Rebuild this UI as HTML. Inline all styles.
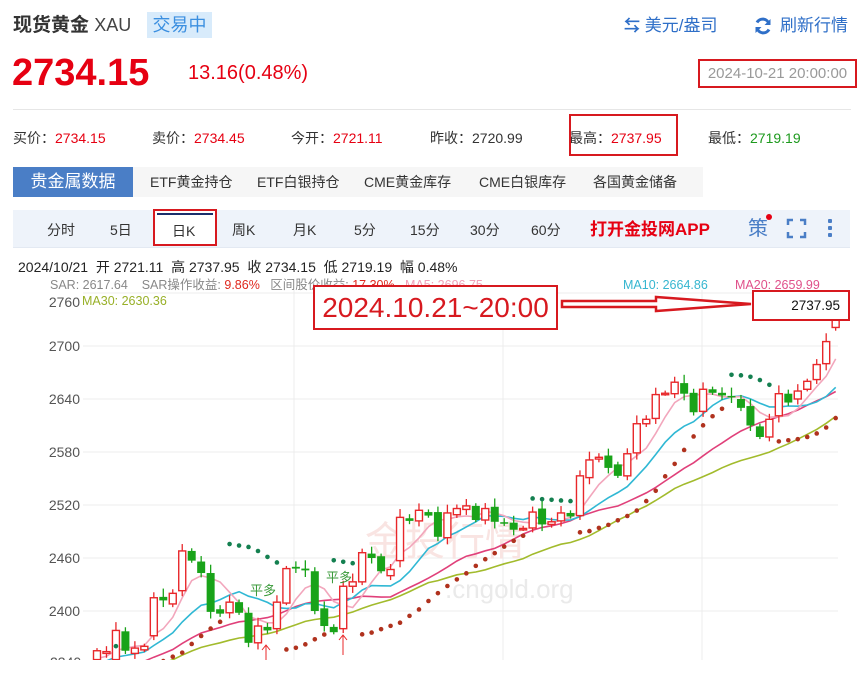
<!DOCTYPE html>
<html><head><meta charset="utf-8">
<style>
*{margin:0;padding:0;box-sizing:border-box}
body{width:859px;height:692px;background:#fff;font-family:"Liberation Sans","Noto Sans CJK SC",sans-serif;position:relative;overflow:hidden;color:#333}
.a{position:absolute;white-space:nowrap}
.red{color:#e60012}
</style></head><body>
<div class="a" style="left:13px;top:12px;font-size:19px;font-weight:bold;color:#333;line-height:26px">现货黄金 <span style="font-weight:normal;font-size:18px;color:#444">XAU</span></div>
<div class="a" style="left:147px;top:12px;width:65px;height:26px;background:#d8ebfb;color:#3b8fe0;font-size:18px;line-height:26px;text-align:center">交易中</div>
<div class="a" style="left:624px;top:14px;font-size:17px;color:#2f6fc8;line-height:24px"><span style="font-weight:bold;font-size:16px">⇆</span> 美元/盎司</div>
<svg class="a" style="left:753px;top:16px" width="20" height="20" viewBox="0 0 20 20"><path d="M16 8A6.5 6.5 0 0 0 4 6.5M4 12a6.5 6.5 0 0 0 12 1.5" fill="none" stroke="#2f6fc8" stroke-width="3"/><path d="M17.5 3v6h-6z M2.5 17v-6h6z" fill="#2f6fc8"/></svg>
<div class="a" style="left:780px;top:14px;font-size:17px;color:#2f6fc8;line-height:24px">刷新行情</div>
<div class="a red" style="left:12px;top:50px;font-size:38px;font-weight:bold;line-height:46px">2734.15</div>
<div class="a red" style="left:188px;top:60px;font-size:20px;line-height:26px">13.16(0.48%)</div>
<div class="a" style="left:698px;top:59px;width:159px;height:29px;border:2px solid #d7191f;color:#999;font-size:15px;line-height:25px;text-align:center">2024-10-21 20:00:00</div>
<div class="a" style="left:13px;top:109px;width:838px;height:1px;background:#e6e6e6"></div>
<div class="a" style="left:13px;top:129px;font-size:14px;line-height:18px">买价：<span class="red">2734.15</span></div>
<div class="a" style="left:152px;top:129px;font-size:14px;line-height:18px">卖价：<span class="red">2734.45</span></div>
<div class="a" style="left:291px;top:129px;font-size:14px;line-height:18px">今开：<span class="red">2721.11</span></div>
<div class="a" style="left:430px;top:129px;font-size:14px;line-height:18px">昨收：2720.99</div>
<div class="a" style="left:569px;top:129px;font-size:14px;line-height:18px">最高：<span class="red">2737.95</span></div>
<div class="a" style="left:569px;top:114px;width:109px;height:42px;border:2px solid #d7191f"></div>
<div class="a" style="left:708px;top:129px;font-size:14px;line-height:18px">最低：<span style="color:#1e9a1e">2719.19</span></div>
<div class="a" style="left:13px;top:167px;width:690px;height:30px;background:#f6f6f6"></div>
<div class="a" style="left:13px;top:167px;width:120px;height:30px;background:#4a7ec6;color:#fff;font-size:17px;line-height:30px;text-align:center">贵金属数据</div>
<div class="a" style="left:150px;top:167px;font-size:14px;line-height:30px;color:#333">ETF黄金持仓</div>
<div class="a" style="left:257px;top:167px;font-size:14px;line-height:30px;color:#333">ETF白银持仓</div>
<div class="a" style="left:364px;top:167px;font-size:14px;line-height:30px;color:#333">CME黄金库存</div>
<div class="a" style="left:479px;top:167px;font-size:14px;line-height:30px;color:#333">CME白银库存</div>
<div class="a" style="left:593px;top:167px;font-size:14px;line-height:30px;color:#333">各国黄金储备</div>
<div class="a" style="left:13px;top:210px;width:837px;height:38px;background:#eef3fa;border-bottom:1px solid #e3e9f2"></div>
<div class="a" style="left:13px;top:210px;font-size:14px;line-height:40px;color:#333">
<span class="a" style="left:34px">分时</span><span class="a" style="left:97px">5日</span><span class="a" style="left:159px">日K</span><span class="a" style="left:219px">周K</span><span class="a" style="left:280px">月K</span><span class="a" style="left:341px">5分</span><span class="a" style="left:397px">15分</span><span class="a" style="left:457px">30分</span><span class="a" style="left:518px">60分</span></div>
<div class="a" style="left:153px;top:209px;width:64px;height:37px;border:2px solid #d7191f;background:#fff"></div>
<div class="a" style="left:157px;top:213px;width:56px;height:2px;background:#1b2f6b"></div>
<div class="a" style="left:172px;top:220px;font-size:14px;line-height:22px;color:#333">日K</div>
<div class="a" style="left:590px;top:218px;font-size:17px;font-weight:bold;color:#e60012;line-height:24px">打开金投网APP</div>
<div class="a" style="left:748px;top:216px;font-size:20px;color:#4a7ec6;line-height:26px">策</div>
<div class="a" style="left:766px;top:214px;width:6px;height:6px;border-radius:50%;background:#e60012"></div>
<svg class="a" style="left:786px;top:218px" width="21" height="21" viewBox="0 0 21 21" fill="none" stroke="#4a7ec6" stroke-width="2.5"><path d="M2 7V2h5M14 2h5v5M19 14v5h-5M7 19H2v-5"/></svg>
<div class="a" style="left:828px;top:219px;width:4px;height:4px;background:#4a7ec6;border-radius:1px"></div>
<div class="a" style="left:828px;top:226px;width:4px;height:4px;background:#4a7ec6;border-radius:1px"></div>
<div class="a" style="left:828px;top:233px;width:4px;height:4px;background:#4a7ec6;border-radius:1px"></div>
<div class="a" style="left:18px;top:257px;font-size:14px;line-height:20px;color:#222">2024/10/21&nbsp; 开 2721.11&nbsp; 高 2737.95&nbsp; 收 2734.15&nbsp; 低 2719.19&nbsp; 幅 0.48%</div>
<div class="a" style="left:50px;top:277px;font-size:12.5px;line-height:16px;color:#888">SAR: 2617.64 &nbsp; &nbsp;SAR操作收益: <span style="color:#e0281e">9.86%</span> &nbsp; 区间股价收益: <span style="color:#e0281e">17.30%</span> &nbsp; <span style="color:#f0a0b8">MA5: 2696.75</span></div>
<div class="a" style="left:623px;top:277px;font-size:12.5px;line-height:16px;color:#36b6d0">MA10: 2664.86</div>
<div class="a" style="left:735px;top:277px;font-size:12.5px;line-height:16px;color:#e0508a">MA20: 2659.99</div>
<div class="a" style="left:82px;top:293px;font-size:12.5px;line-height:16px;color:#98b028">MA30: 2630.36</div>
<svg class="a" style="left:0;top:0" width="859" height="692" id="ch"></svg>
<div class="a" style="left:313px;top:285px;width:245px;height:45px;border:2px solid #d7191f;background:#fff;color:#d7191f;font-size:28px;line-height:41px;text-align:center;font-family:'Liberation Sans Narrow','Liberation Sans',sans-serif">2024.10.21~20:00</div>
<svg class="a" style="left:558px;top:294px" width="196" height="22"><path d="M4 7H98V3L193 10 98 17V13H4Z" fill="#fff" stroke="#d7191f" stroke-width="2.5"/></svg>
<div class="a" style="left:752px;top:290px;width:98px;height:31px;border:2px solid #d7191f;background:#fff;font-size:13.5px;line-height:27px;text-align:right;padding-right:8px;color:#111">2737.95</div>
<script>
var D=[[2345,2355],[2352,2354],[2345,2378],[2377,2355],[2352,2358],[2356,2360],[2372,2415],[2416,2412],[2408,2420],[2423,2468],[2468,2457],[2456,2443],[2443,2399],[2402,2397],[2398,2410],[2410,2398],[2398,2364],[2364,2383],[2382,2378],[2380,2410],[2409,2448],[2450,2448],[2448,2446],[2445,2400],[2403,2383],[2382,2376],[2380,2428],[2428,2433],[2433,2466],[2465,2460],[2462,2445],[2440,2447],[2457,2506],[2505,2502],[2502,2514],[2512,2508],[2512,2484],[2483,2511],[2509,2516],[2515,2519],[2519,2503],[2503,2516],[2518,2501],[2500.5,2500],[2500,2492],[2493,2493.5],[2494,2512],[2516,2498],[2498,2501],[2502,2511],[2511,2507],[2508,2553],[2551,2571],[2572,2574],[2576,2562],[2566,2553],[2553,2578],[2579,2612],[2612,2617],[2618,2645],[2646,2646.5],[2646,2659],[2658,2646],[2647,2625],[2626,2651],[2651,2647],[2647,2644],[2643.5,2643],[2640,2630],[2632,2610],[2609,2597],[2597,2617],[2621,2646],[2646,2636],[2640,2649],[2651,2660],[2662,2679],[2680,2705],[2721,2734]];
function Y(p){return 346+(2700-p)*53/60}
function X(i){return 97+9.47*i}
var s='';
[2760,2700,2640,2580,2520,2460,2400].forEach(function(p){var y=Y(p);s+='<line x1="83" x2="838" y1="'+y+'" y2="'+y+'" stroke="#ececec"/>';var ty=p==2760?y+14:y+5;s+='<text x="80" y="'+ty+'" text-anchor="end" font-size="14" fill="#555" font-family="Liberation Sans">'+p+'</text>';});
[294,503,702].forEach(function(x){s+='<line x1="'+x+'" x2="'+x+'" y1="290" y2="660" stroke="#ececec"/>'});
s+='<text x="50" y="667" font-size="14" fill="#555" font-family="Liberation Sans">2340</text>';
s+='<text x="445" y="598" font-size="26" fill="#eaeaea" font-family="Liberation Sans">.cngold.org</text>';
s+='<text x="365" y="555" font-size="40" fill="#f9e4e2" font-family="Noto Sans CJK SC">金投行情</text>';
var H=[],L=[],C=[];
D.forEach(function(d,i){var w=3+((i*7)%5)*1.6;H.push(Math.max(d[0],d[1])+w);L.push(Math.min(d[0],d[1])-w*0.8);C.push(d[1]);});
var pre=[];for(var k=0;k<30;k++)pre.push(2300+k*1.6);
var all=pre.concat(C);
function ma(n,col){var pts=[];for(var i=0;i<C.length;i++){var j=i+30,t=0;for(var m=0;m<n;m++)t+=all[j-m];pts.push(X(i).toFixed(1)+','+Y(t/n).toFixed(1));}s+='<polyline points="'+pts.join(' ')+'" fill="none" stroke="'+col+'" stroke-width="1.6"/>';}
ma(30,'#a2bb2c');ma(20,'#e0407a');ma(10,'#30b8d4');ma(5,'#f2a6bc');
D.forEach(function(d,i){var x=X(i),o=d[0],c=d[1],up=c>=o,col=up?'#e8272a':'#19a319';var t=Y(Math.max(o,c)),b=Y(Math.min(o,c));if(b-t<1.5)b=t+1.5;
s+='<line x1="'+x+'" x2="'+x+'" y1="'+Y(H[i])+'" y2="'+Y(L[i])+'" stroke="'+col+'" stroke-width="1.3"/>';
if(up)s+='<rect x="'+(x-3.5)+'" y="'+t+'" width="7" height="'+(b-t)+'" fill="#fff" stroke="'+col+'" stroke-width="1.4"/>';
else s+='<rect x="'+(x-4)+'" y="'+t+'" width="8" height="'+(b-t)+'" fill="'+col+'"/>';});
var tr=1,af=0.02,ep=H[0],sar=L[0]-5;
for(var i=1;i<C.length;i++){sar=sar+af*(ep-sar);
if(tr==1){if(L[i]<sar){tr=-1;sar=ep;ep=L[i];af=0.02;}else if(H[i]>ep){ep=H[i];af=Math.min(0.2,af+0.02);}}
else{if(H[i]>sar){tr=1;sar=ep;ep=H[i];af=0.02;}else if(L[i]<ep){ep=L[i];af=Math.min(0.2,af+0.02);}}
s+='<circle cx="'+X(i)+'" cy="'+Y(sar)+'" r="2.3" fill="'+(tr==1?'#b0321e':'#148050')+'"/>';}
s+='<text x="250" y="595" font-size="13" fill="#3a9a3a" font-family="Noto Sans CJK SC">平多</text><text x="326" y="582" font-size="13" fill="#3a9a3a" font-family="Noto Sans CJK SC">平多</text>';
s+='<path d="M266 645v15M262 650l4-5 4 5M343 635v20M339 640l4-5 4 5" stroke="#e8272a" fill="none"/>';
s+='<rect x="0" y="660" width="859" height="32" fill="#fff"/>';
document.getElementById('ch').innerHTML=s;
</script>
</body></html>
